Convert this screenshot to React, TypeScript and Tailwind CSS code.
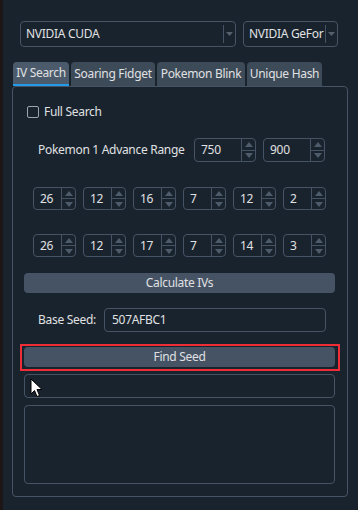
import React from "react";

const font = { fontFamily: '"Noto Sans", "Open Sans", sans-serif', letterSpacing: "-0.3px" };

const ComboBox = ({ value, width }: { value: string; width: string }) => (
  <div
    className={`${width} h-[26px] flex items-stretch border border-[#455364] rounded-[4px] overflow-hidden`}
  >
    <div className="flex-1 flex items-center pl-[5px] text-[12px] text-[#e0e1e3] whitespace-nowrap overflow-hidden">
      {value}
    </div>
    <div className="w-[12px] shrink-0 my-[3px] border-l border-[#455364] flex items-center justify-center">
      <svg width="7" height="4" viewBox="0 0 7 4">
        <path d="M0 0 L7 0 L3.5 4 Z" fill="#55606d" />
      </svg>
    </div>
  </div>
);

const SpinBox = ({ value, width, height }: { value: string; width: string; height: string }) => (
  <div className={`${width} ${height} flex items-stretch border border-[#455364] rounded-[4px] overflow-hidden`}>
    <div className="flex-1 flex items-center pl-[6px] text-[12px] text-[#e0e1e3]">{value}</div>
    <div className="w-[14px] flex flex-col border-l border-[#455364]">
      <div className="flex-1 flex items-center justify-center border-b border-[#455364]">
        <svg width="8" height="5" viewBox="0 0 8 5">
          <path d="M0 5 L8 5 L4 0 Z" fill="#4d5b6a" />
        </svg>
      </div>
      <div className="flex-1 flex items-center justify-center">
        <svg width="8" height="5" viewBox="0 0 8 5">
          <path d="M0 0 L8 0 L4 5 Z" fill="#4d5b6a" />
        </svg>
      </div>
    </div>
  </div>
);

const ivRow1 = ["26", "12", "16", "7", "12", "2"];
const ivRow2 = ["26", "12", "17", "7", "14", "3"];

const tabs = [
  { name: "IV Search", w: "w-[56px]" },
  { name: "Soaring Fidget", w: "w-[84px]" },
  { name: "Pokemon Blink", w: "w-[88px]" },
  { name: "Unique Hash", w: "w-[75px]" },
];

export default function App() {
  return (
    <div
      className="relative w-[358px] h-[510px] bg-[#19232d] overflow-hidden border-l-[3px] border-[#1c1716]"
      style={font}
    >
      <div className="pt-[21px] pl-[17px] flex gap-[7px]">
        <ComboBox value="NVIDIA CUDA" width="w-[216px]" />
        <ComboBox value="NVIDIA GeFor" width="w-[95px]" />
      </div>

      <div className="mt-[15px] pl-[10px] flex gap-[2px]">
        {tabs.map((tab, i) => (
          <div
            key={tab.name}
            className={`${tab.w} h-[24px] flex items-center justify-center rounded-t-[4px] text-[12px] text-[#e0e1e3] whitespace-nowrap ${
              i === 0 ? "bg-[#4b5b6b] border-b-[2px] border-[#259ae9]" : "bg-[#3d4a58]"
            }`}
          >
            {tab.name}
          </div>
        ))}
      </div>

      <div className="ml-[9px] w-[336px] h-[411px] border border-[#455364] rounded-[4px] flex flex-col">
        <div className="mt-[18px] ml-[14px] flex items-center gap-[5px] h-[13px]">
          <div className="w-[12px] h-[12px] border border-[#9aa5b1] rounded-[2px]" />
          <span className="text-[12px] text-[#e0e1e3]">Full Search</span>
        </div>

        <div className="mt-[20px] ml-[25px] flex items-center h-[24px]">
          <span className="w-[156px] text-[12px] text-[#e0e1e3] whitespace-nowrap">Pokemon 1 Advance Range</span>
          <div className="flex gap-[7px]">
            <SpinBox value="750" width="w-[62px]" height="h-[24px]" />
            <SpinBox value="900" width="w-[62px]" height="h-[24px]" />
          </div>
        </div>

        <div className="mt-[25px] ml-[20px] flex gap-[7px]">
          {ivRow1.map((v, i) => (
            <SpinBox key={i} value={v} width="w-[43px]" height="h-[23px]" />
          ))}
        </div>

        <div className="mt-[24px] ml-[20px] flex gap-[7px]">
          {ivRow2.map((v, i) => (
            <SpinBox key={i} value={v} width="w-[43px]" height="h-[23px]" />
          ))}
        </div>

        <button className="mt-[16px] ml-[11px] w-[311px] h-[20px] bg-[#455364] rounded-[4px] text-[12px] text-[#e0e1e3] flex items-center justify-center">
          Calculate IVs
        </button>

        <div className="mt-[15px] ml-[25px] flex items-center h-[24px]">
          <span className="w-[66px] text-[12px] text-[#e0e1e3] whitespace-nowrap">Base Seed:</span>
          <div className="w-[222px] h-[24px] border border-[#455364] rounded-[4px] flex items-center pl-[7px] text-[12px] text-[#e0e1e3]">
            507AFBC1
          </div>
        </div>

        <div className="relative mt-[15px] ml-[11px] w-[311px] h-[20px]">
          <button className="w-full h-full bg-[#455364] rounded-[4px] text-[12px] text-[#e0e1e3] flex items-center justify-center">
            Find Seed
          </button>
          <div className="absolute -left-[4px] -right-[5px] -top-[3px] -bottom-[4px] border-[2px] border-[#ee2d36]" />
        </div>

        <div className="relative mt-[7px] ml-[11px] w-[311px] h-[24px] border border-[#455364] rounded-[4px]">
          <svg className="absolute left-[5px] top-[3px]" width="13" height="20" viewBox="0 0 13 20">
            <path
              d="M1 1 L1 16 L4.5 12.5 L7 18.5 L9.5 17.5 L7 11.5 L12 11.5 Z"
              fill="#ffffff"
              stroke="#000000"
              strokeWidth="1"
              strokeLinejoin="round"
            />
          </svg>
        </div>

        <div className="mt-[7px] ml-[11px] w-[311px] h-[79px] border border-[#455364] rounded-[4px]" />
      </div>
    </div>
  );
}
